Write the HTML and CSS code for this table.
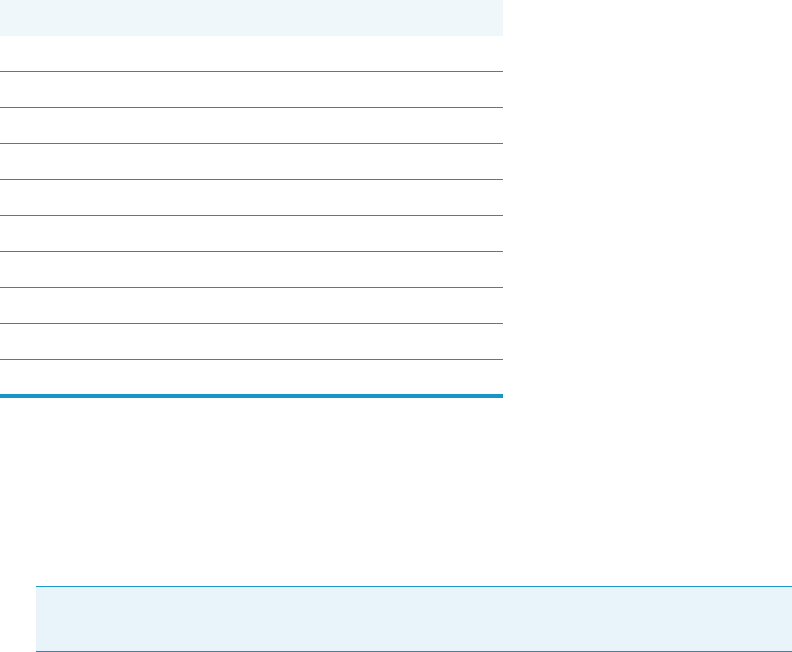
FILE: index.html
```html
<!DOCTYPE html>
<html lang="en">
<head>
  <meta charset="UTF-8" />
  <meta name="viewport" content="width=device-width, initial-scale=1.0"/>
  <title>Table</title>
  <link rel="stylesheet" href="styles.css">
</head>
<body>
  <table class="grid">
    <thead>
      <tr><th></th></tr>
    </thead>
    <tbody>
      <tr><td></td></tr>
      <tr><td></td></tr>
      <tr><td></td></tr>
      <tr><td></td></tr>
      <tr><td></td></tr>
      <tr><td></td></tr>
      <tr><td></td></tr>
      <tr><td></td></tr>
      <tr><td></td></tr>
      <tr class="last"><td></td></tr>
    </tbody>
  </table>

  <div class="note"></div>
</body>
</html>
```

FILE: styles.css
```css
body {
  margin: 0;
  font-family: "Open Sans", Arial, sans-serif;
  background: #fff;
}
.grid {
  width: 503px;
  border-collapse: collapse;
  border-bottom: 4px solid #1596c4;
}
.grid th {
  height: 36px;
  padding: 0;
  background: #eff7fb;
}
.grid td {
  height: 35px;
  padding: 0;
  border-bottom: 1px solid #2f8aa6;
}
.grid tr.last td {
  height: 34px;
  border-bottom: none;
}
.note {
  margin: 188px 0 0 36px;
  height: 64px;
  background: #e8f4fa;
  border-top: 1px solid #1a98c8;
  border-bottom: 1px solid #2f8aa6;
}
```
